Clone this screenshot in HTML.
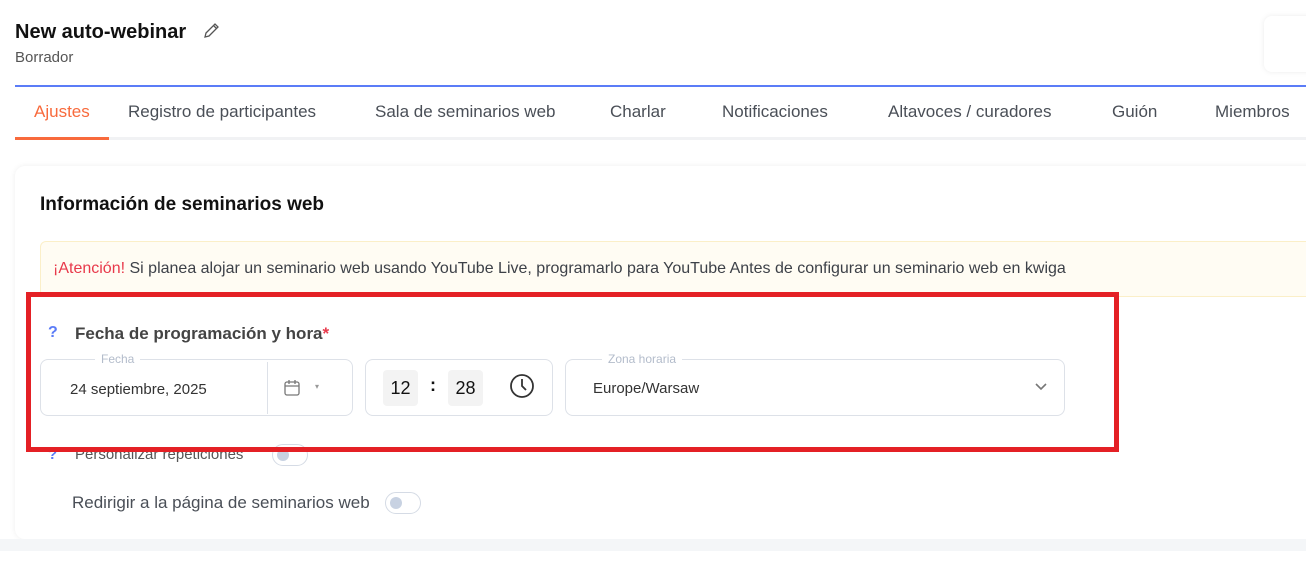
<!DOCTYPE html>
<html><head><meta charset="utf-8"><style>
*{box-sizing:border-box;margin:0;padding:0}
body{width:1306px;height:567px;overflow:hidden;background:#fff;font-family:"Liberation Sans",sans-serif;position:relative;color:#3d4148}
.a{position:absolute;white-space:nowrap}
.tab{position:absolute;top:102px;font-size:17px;color:#4a4f57}
.box{position:absolute;border:1px solid #dde1e8;border-radius:8px;background:#fff}
.lg{position:absolute;top:-8px;background:#fff;padding:0 6px;font-size:12px;color:#b3bccb}
.tg{position:absolute;width:36px;height:22px;border:1px solid #d5dbe5;border-radius:11px;background:#fff}
.tg:after{content:"";position:absolute;left:4px;top:4px;width:12px;height:12px;border-radius:50%;background:#c8d2e2}
</style></head><body>
<div class="a" style="left:15px;top:21px;font-size:20px;font-weight:bold;color:#111">New auto-webinar</div>
<svg class="a" style="left:203px;top:22px" width="17" height="17" viewBox="0 0 17 17" fill="none" stroke="#555" stroke-width="1.3"><path d="M2 15l1-4 9-9 3 3-9 9z M10.5 3.5l3 3"/></svg>
<div class="a" style="left:15px;top:49px;font-size:15px;color:#555">Borrador</div>
<div class="a" style="left:1264px;top:16px;width:60px;height:56px;border-radius:8px;box-shadow:0 0 6px rgba(0,0,0,.08);background:#fff"></div>
<div class="a" style="left:15px;top:85px;width:1291px;height:2px;background:#5b7cf7"></div>
<div class="a" style="left:15px;top:137px;width:1291px;height:3px;background:#f1f2f4"></div>
<div class="a" style="left:15px;top:137px;width:94px;height:3px;background:#f86a3c"></div>
<div class="tab" style="left:34px;color:#f86a3c">Ajustes</div>
<div class="tab" style="left:128px">Registro de participantes</div>
<div class="tab" style="left:375px">Sala de seminarios web</div>
<div class="tab" style="left:610px">Charlar</div>
<div class="tab" style="left:722px">Notificaciones</div>
<div class="tab" style="left:888px">Altavoces / curadores</div>
<div class="tab" style="left:1112px">Guión</div>
<div class="tab" style="left:1215px">Miembros</div>
<div class="a" style="left:15px;top:166px;width:1300px;height:373px;border-radius:10px;box-shadow:0 0 6px rgba(0,0,0,.07);background:#fff"></div>
<div class="a" style="left:0;top:539px;width:1306px;height:12px;background:#f4f6f8"></div>
<div class="a" style="left:15px;top:551px;width:1300px;height:20px;background:#fff;border-radius:10px 10px 0 0"></div>
<div class="a" style="left:40px;top:194px;font-size:19px;font-weight:bold;color:#111">Información de seminarios web</div>
<div class="a" style="left:40px;top:241px;width:1280px;height:56px;background:#fffcf3;border:1px solid #fbefc8;border-radius:6px"></div>
<div class="a" style="left:53px;top:260px;font-size:16px;color:#3d4148"><span style="color:#e8394b">¡Atención!</span> Si planea alojar un seminario web usando YouTube Live, programarlo para YouTube Antes de configurar un seminario web en kwiga</div>
<div class="a" style="left:48px;top:324px;font-size:16px;color:#5b7cf7;font-weight:bold">?</div>
<div class="a" style="left:75px;top:324px;font-size:17px;font-weight:bold;color:#444">Fecha de programación y hora<span style="color:#e8394b">*</span></div>
<div class="box" style="left:40px;top:359px;width:313px;height:57px">
<div class="lg" style="left:54px">Fecha</div>
<div class="a" style="left:29px;top:21px;font-size:15px;color:#333">24 septiembre, 2025</div>
<div class="a" style="left:226px;top:2px;width:1px;height:52px;background:#dde1e8"></div>
<svg class="a" style="left:242px;top:19px" width="18" height="18" viewBox="0 0 18 18" fill="none" stroke="#777" stroke-width="1.3"><rect x="2" y="3" width="14" height="13" rx="2"/><path d="M2 7h14M6 1v4M12 1v4"/></svg>
<div class="a" style="left:274px;top:22px;font-size:8px;color:#999">▾</div>
</div>
<div class="box" style="left:365px;top:359px;width:188px;height:57px">
<div class="a" style="left:17px;top:10px;width:35px;height:36px;background:#f3f3f3;border-radius:4px;text-align:center;line-height:36px;font-size:18px;color:#111">12</div>
<div class="a" style="left:64px;top:15px;font-size:18px;font-weight:bold;color:#111">:</div>
<div class="a" style="left:82px;top:10px;width:35px;height:36px;background:#f3f3f3;border-radius:4px;text-align:center;line-height:36px;font-size:18px;color:#111">28</div>
<svg class="a" style="left:143px;top:13px" width="26" height="26" viewBox="0 0 26 26" fill="none" stroke="#333" stroke-width="1.8"><circle cx="13" cy="13" r="11"/><path d="M13 6v7l4 4"/></svg>
</div>
<div class="box" style="left:565px;top:359px;width:500px;height:57px">
<div class="lg" style="left:36px">Zona horaria</div>
<div class="a" style="left:27px;top:20px;font-size:15px;color:#333">Europe/Warsaw</div>
<svg class="a" style="left:468px;top:22px" width="14" height="10" viewBox="0 0 14 10" fill="none" stroke="#777" stroke-width="1.6"><path d="M2 2l5 5 5-5"/></svg>
</div>
<div class="a" style="left:48px;top:446px;font-size:15px;color:#5b7cf7;font-weight:bold">?</div>
<div class="a" style="left:75px;top:446px;font-size:15px;color:#555">Personalizar repeticiones</div>
<div class="tg" style="left:272px;top:444px"></div>
<div class="a" style="left:72px;top:493px;font-size:17px;color:#4a4f57">Redirigir a la página de seminarios web</div>
<div class="tg" style="left:385px;top:492px"></div>
<div class="a" style="left:26px;top:292px;width:1093px;height:160px;border:5px solid #e42025"></div>
</body></html>
